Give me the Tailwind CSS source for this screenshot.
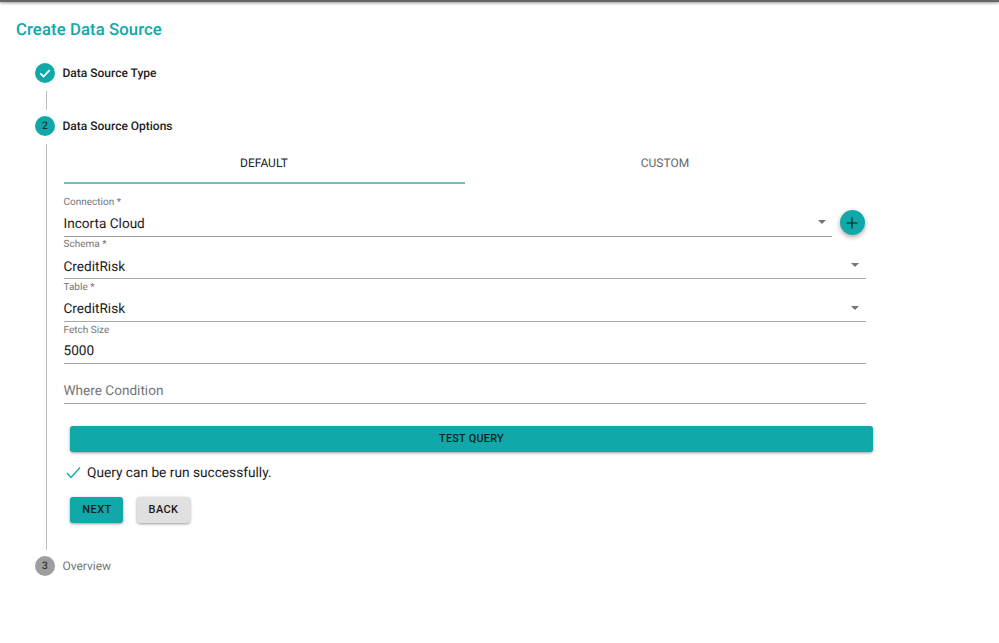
<!DOCTYPE html>
<html>
<head>
<meta charset="utf-8">
<script src="https://cdn.jsdelivr.net/npm/@tailwindcss/browser@4"></script>
</head>
<body class="bg-white font-['Roboto',sans-serif] text-[#1a1a1a] [text-rendering:geometricPrecision]">
<div class="w-[999px] h-[643px] overflow-hidden relative">
  <div class="h-[2px] w-full bg-[#666] shadow-[0_1px_3px_rgba(0,0,0,0.5)]"></div>
  <h1 class="mt-[18px] ml-4 h-[22px] leading-[22px] text-[16.7px] font-medium tracking-[0.1px] text-[#10a8a8]">Create Data Source</h1>

  <div class="mt-[21px] ml-[35px] flex flex-col">
    <!-- Step 1 -->
    <div class="flex items-center h-5">
      <div class="w-5 h-5 rounded-full bg-[#10a8a8] flex items-center justify-center">
        <svg class="w-[14px] h-[14px]" viewBox="0 0 24 24" fill="none" stroke="white" stroke-width="3"><path d="M4 12.5l5.5 5.5L20 7"/></svg>
      </div>
      <span class="ml-[7.5px] text-[12px] font-medium text-[#1c1c1c]">Data Source Type</span>
    </div>
    <div class="ml-[10.5px] mt-[8px] mb-[6px] w-px h-[19px] bg-[#bdbdbd]"></div>
    <!-- Step 2 -->
    <div class="flex items-center h-5">
      <div class="w-5 h-5 rounded-full bg-[#10a8a8] flex items-center justify-center text-[10.5px] text-[#1a1a1a]">2</div>
      <span class="ml-[7.5px] text-[12px] font-medium text-[#1c1c1c]">Data Source Options</span>
    </div>
    <div class="ml-[10.5px] mt-[8px] border-l border-[#bdbdbd] h-[406px] pl-[17px] flex flex-col">
      <!-- Tabs -->
      <div class="flex w-[802px] h-[40px] mb-[9px]">
        <div class="flex-1 flex items-center justify-center border-b-2 border-[#6fc1c1] text-[12px] text-[#222] pb-[1px]">DEFAULT</div>
        <div class="flex-1 flex items-center justify-center text-[12px] text-[#666] pb-[3px]">CUSTOM</div>
      </div>
      <!-- Connection -->
      <div class="flex w-[802px] items-end">
        <div class="w-[768px] h-[44px] border-b border-[#9a9a9a] flex flex-col relative">
          <span class="text-[10px] leading-[12px] mt-[4px] text-[#757575]">Connection *</span>
          <span class="text-[13.6px] leading-[20px] mt-[5px] text-[#1a1a1a]">Incorta Cloud</span>
          <span class="absolute right-[6px] top-[27px] w-0 h-0 border-x-[4px] border-x-transparent border-t-[4px] border-t-[#757575]"></span>
        </div>
        <button class="ml-[8px] mb-[2px] w-[25px] h-[25px] rounded-full bg-[#10a8a8] shadow-[0_2px_5px_rgba(0,0,0,0.35)] flex items-center justify-center">
          <svg class="w-[14px] h-[14px]" viewBox="0 0 14 14" fill="none" stroke="#102020" stroke-width="1.2"><path d="M7 1.5v11M1.5 7h11"/></svg>
        </button>
      </div>
      <!-- Schema -->
      <div class="w-[802px] h-[42px] border-b border-[#a8a8a8] flex flex-col relative">
        <span class="text-[10px] leading-[12px] mt-[2px] text-[#757575]">Schema *</span>
        <span class="text-[13.6px] leading-[20px] mt-[6px] text-[#1a1a1a]">CreditRisk</span>
        <span class="absolute right-[7px] top-[26px] w-0 h-0 border-x-[4px] border-x-transparent border-t-[4px] border-t-[#757575]"></span>
      </div>
      <!-- Table -->
      <div class="w-[802px] h-[43px] border-b border-[#a8a8a8] flex flex-col relative">
        <span class="text-[10px] leading-[12px] mt-[3px] text-[#757575]">Table *</span>
        <span class="text-[13.6px] leading-[20px] mt-[5px] text-[#1a1a1a]">CreditRisk</span>
        <span class="absolute right-[7px] top-[27px] w-0 h-0 border-x-[4px] border-x-transparent border-t-[4px] border-t-[#757575]"></span>
      </div>
      <!-- Fetch -->
      <div class="w-[802px] h-[42px] border-b border-[#a8a8a8] flex flex-col">
        <span class="text-[10px] leading-[12px] mt-[3px] text-[#757575]">Fetch Size</span>
        <span class="text-[13.6px] leading-[20px] mt-[4px] text-[#1a1a1a]">5000</span>
      </div>
      <!-- Where -->
      <div class="w-[802px] h-[40px] border-b border-[#a8a8a8] flex flex-col">
        <span class="text-[13.6px] leading-[20px] mt-[17px] text-[#757575]">Where Condition</span>
      </div>
      <!-- Test -->
      <button class="ml-[6.5px] mt-[22px] w-[803px] h-[26px] rounded-[3px] bg-[#10a8a8] shadow-[0_1px_3px_rgba(0,0,0,0.4)] text-[10.8px] font-medium tracking-[0.3px] text-[#102020]">TEST QUERY</button>
      <!-- Status -->
      <div class="flex items-center mt-[10px] h-[20px] ml-[2.5px]">
        <svg class="w-[15px] h-[13px]" viewBox="0 0 15 13" fill="none" stroke="#10a8a8" stroke-width="1.3"><path d="M1 7l4 4.5L14 1.5"/></svg>
        <span class="ml-[6px] pt-[2px] text-[13.7px] text-[#1a1a1a]">Query can be run successfully.</span>
      </div>
      <!-- Actions -->
      <div class="flex ml-[6.5px] mt-[15px] gap-[14px]">
        <button class="w-[53px] h-[26px] pl-[1px] rounded-[3px] bg-[#10a8a8] shadow-[0_1px_3px_rgba(0,0,0,0.4)] text-[11px] font-medium tracking-[0.4px] text-[#102020]">NEXT</button>
        <button class="w-[53px] h-[26px] rounded-[3px] bg-[#e0e0e0] shadow-[0_1px_3px_rgba(0,0,0,0.4)] text-[11px] font-medium tracking-[0.4px] text-[#1a1a1a]">BACK</button>
      </div>
    </div>
    <!-- Step 3 -->
    <div class="flex items-center h-5 mt-[6px]">
      <div class="w-5 h-5 rounded-full bg-[#9e9e9e] flex items-center justify-center text-[10.5px] text-[#1a1a1a]">3</div>
      <span class="ml-[7.5px] text-[12px] text-[#757575]">Overview</span>
    </div>
  </div>
</div>
</body>
</html>
